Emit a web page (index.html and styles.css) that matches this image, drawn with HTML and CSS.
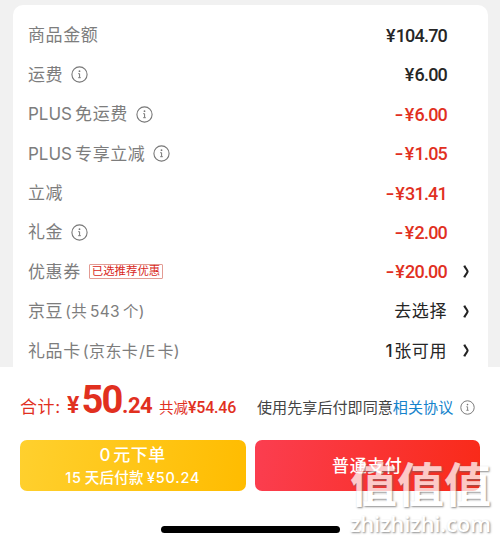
FILE: index.html
```
<!DOCTYPE html>
<html lang="zh-CN">
<head>
  <meta charset="UTF-8">
  <title>结算</title>
  <link rel="stylesheet" href="styles.css">
</head>
<body>
  <svg width="0" height="0" class="defs">
    <symbol id="info" viewBox="0 0 17 17">
      <circle cx="8.5" cy="8.5" r="7.6" fill="none" stroke="currentColor" stroke-width="1.1"/>
      <circle cx="8.5" cy="5.2" r="0.9" fill="currentColor"/>
      <path d="M7.2 7.7h1.4v3.8M7.2 11.7h2.6" fill="none" stroke="currentColor" stroke-width="1"/>
    </symbol>
    <symbol id="arrow" viewBox="0 0 7 13">
      <path d="M1.3 0.6C2 3 4.6 5 4.6 6.5S2 10 1.3 12.4" fill="none" stroke="currentColor" stroke-width="2.1"/>
    </symbol>
  </svg>
  <div class="page">
    <div class="card">
      <div class="row"><span class="label">商品金额</span><span class="price"><u>¥</u>104.70</span></div>
      <div class="row"><span class="label">运费</span><svg class="info"><use href="#info"/></svg><span class="price"><u>¥</u>6.00</span></div>
      <div class="row"><span class="label"><span class="plus">PLUS</span>免运费</span><svg class="info"><use href="#info"/></svg><span class="price red"><i>-</i><u>¥</u>6.00</span></div>
      <div class="row"><span class="label"><span class="plus">PLUS</span>专享立减</span><svg class="info"><use href="#info"/></svg><span class="price red"><i>-</i><u>¥</u>1.05</span></div>
      <div class="row"><span class="label">立减</span><span class="price red"><i>-</i><u>¥</u>31.41</span></div>
      <div class="row"><span class="label">礼金</span><svg class="info"><use href="#info"/></svg><span class="price red"><i>-</i><u>¥</u>2.00</span></div>
      <div class="row"><span class="label">优惠券</span><span class="tag">已选推荐优惠</span><span class="price red"><i>-</i><u>¥</u>20.00</span><svg class="arrow"><use href="#arrow"/></svg></div>
      <div class="row"><span class="label">京豆<small class="beans">(共<b>543</b>个)</small></span><span class="choice">去选择</span><svg class="arrow"><use href="#arrow"/></svg></div>
      <div class="row"><span class="label">礼品卡<small>(京东卡<b class="slash">/E</b>卡)</small></span><span class="choice"><b>1</b>张可用</span><svg class="arrow"><use href="#arrow"/></svg></div>
    </div>
    <div class="footer">
      <div class="total">
        <span class="total-label">合计:</span>
        <span class="yen">¥</span><span class="big">50</span><span class="cents">.24</span>
        <span class="saved">共减<b>¥54.46</b></span>
        <span class="agree">使用先享后付即同意<a>相关协议</a></span>
        <svg class="info small"><use href="#info"/></svg>
      </div>
      <div class="buttons">
        <div class="btn yellow"><span class="btn-title"><b>0</b>元下单</span><span class="btn-sub"><b>15</b>天后付款<b>¥50.24</b></span></div>
        <div class="btn pay"><span class="btn-title">普通支付</span></div>
      </div>
      <div class="home-bar"></div>
    </div>
    <div class="watermark">
      <div class="wm-name">值值值</div>
      <div class="wm-url">zhizhizhi.com</div>
    </div>
  </div>
</body>
</html>
```
FILE: styles.css
```
:root {
  --gray: #7d7d7d;
  --dark: #262626;
  --red: #e1301f;
}
* {
  box-sizing: border-box;
}
body {
  margin: 0;
  font-family: Inter, "Noto Sans CJK SC", sans-serif;
  background: #f1f1f1;
}
.defs {
  position: absolute;
}
.page {
  position: relative;
  width: 500px;
  height: 543px;
  overflow: hidden;
}
.card {
  height: 362px;
  margin: 5px 12px 0 13px;
  padding: 10.8px 17px 0 15px;
  background: #fff;
  border-radius: 10px 10px 0 0;
}
.row {
  display: flex;
  align-items: center;
  height: 39.4px;
  padding-right: 24px;
  white-space: nowrap;
}
.row:has(.arrow) {
  padding-right: 1px;
}
.label {
  font-size: 17px;
  letter-spacing: 0.6px;
  line-height: 24px;
  color: var(--gray);
}
.plus {
  letter-spacing: 0;
  margin-right: 3px;
}
.label small {
  font-size: 16px;
  letter-spacing: 0.4px;
  margin-left: 2px;
}
.label .beans {
  font-size: 15.5px;
  letter-spacing: 0.3px;
}
.label b {
  font-weight: 400;
  margin: 0 3px;
}
.label .slash {
  margin: 0 2px 0 1px;
}
.info {
  width: 17px;
  height: 17px;
  margin-left: 8px;
  color: #777;
}
.plus ~ .info {
  margin-left: 9px;
}
.tag {
  height: 15px;
  margin-left: 8px;
  padding: 0 2px;
  border: 1px solid #e39b93;
  border-radius: 1px;
  font-size: 11.4px;
  line-height: 13px;
  color: #d8281c;
}
.price {
  margin-left: auto;
  font-family: Roboto, sans-serif;
  font-size: 18px;
  font-weight: 500;
  letter-spacing: -0.8px;
  color: var(--dark);
}
.price u {
  display: inline-block;
  margin-right: 1px;
  text-decoration: none;
}
.price i {
  font-style: normal;
  display: inline-block;
  margin-right: 2px;
  transform: scaleX(1.4);
  transform-origin: right;
}
.red {
  color: var(--red);
}
.choice {
  margin-left: auto;
  font-size: 17px;
  line-height: 24px;
  letter-spacing: 0.6px;
  color: var(--dark);
}
.choice b {
  margin-right: 1px;
  font-weight: 500;
}
.arrow {
  width: 7px;
  height: 13px;
  margin-left: 16px;
  color: #222;
}
.footer {
  height: 176px;
  padding: 13px 20px 0;
  background: #fff;
}
.total {
  display: flex;
  align-items: baseline;
  height: 60px;
  line-height: 40px;
  color: var(--red);
  white-space: nowrap;
}
.total-label {
  width: 47px;
  font-size: 17px;
  letter-spacing: 0.6px;
}
.yen, .big, .cents, .saved b {
  font-family: Roboto, sans-serif;
  font-weight: 700;
}
.yen {
  width: 14.5px;
  font-size: 23px;
}
.big {
  width: 40.5px;
  font-size: 38px;
  letter-spacing: -1.8px;
}
.cents {
  width: 37px;
  font-size: 22px;
  letter-spacing: -0.5px;
}
.saved {
  width: 98px;
  font-size: 14.5px;
}
.saved b {
  font-size: 16px;
  font-weight: 500;
  letter-spacing: -0.2px;
}
.agree {
  font-size: 15.1px;
  color: #444;
}
.agree a {
  color: #1684cc;
}
.info.small {
  width: 15px;
  height: 15px;
  margin-left: 7px;
  align-self: flex-start;
  margin-top: 20px;
}
.buttons {
  display: flex;
  gap: 9px;
}
.btn {
  display: flex;
  flex-direction: column;
  align-items: center;
  justify-content: center;
  width: 225.5px;
  height: 51px;
  padding-top: 1px;
  border-radius: 7px;
  color: #fff;
  font-weight: 500;
}
.yellow {
  background: linear-gradient(100deg, #ffd02e, #ffbc00);
}
.pay {
  background: linear-gradient(100deg, #fb3e50, #f92a18);
}
.btn b {
  font-weight: 500;
}
.btn-title {
  font-size: 17px;
  letter-spacing: 0.6px;
  line-height: 23px;
}
.btn-title b {
  margin-right: 2px;
}
.btn-sub {
  font-size: 14.5px;
  letter-spacing: 0.3px;
  line-height: 21px;
}
.btn-sub b {
  letter-spacing: 0.8px;
}
.btn-sub b:first-child {
  margin-right: 3px;
}
.btn-sub b:last-child {
  margin-left: 3px;
}
.home-bar {
  width: 179px;
  height: 7px;
  margin: 35px 0 0 141px;
  border-radius: 4px;
  background: #000;
}
/* site mark laid over the bottom right corner */
.watermark {
  position: absolute;
  left: 350px;
  top: 461px;
  color: #fff;
  opacity: 0.74;
  white-space: nowrap;
  text-shadow: 1px 1px 2px #666;
}
.wm-name {
  font-size: 47px;
  font-weight: 700;
  line-height: 48px;
}
.wm-url {
  font-family: "Open Sans", sans-serif;
  font-size: 22px;
  font-weight: 600;
  line-height: 28px;
  letter-spacing: -0.2px;
}
```
